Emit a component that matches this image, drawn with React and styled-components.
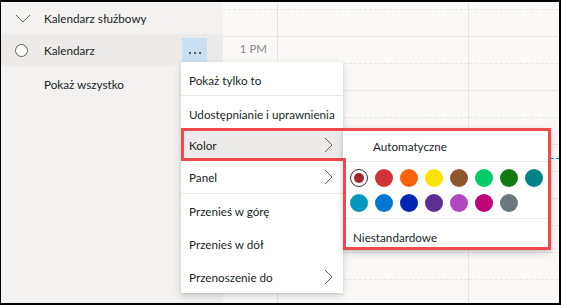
import React from 'react';
import styled, { createGlobalStyle } from 'styled-components';

const GlobalStyle = createGlobalStyle`
  body {
    margin: 0;
    font-family: Lato, "Open Sans", sans-serif;
    color: #201f1e;
  }
`;

const Frame = styled.div`
  position: relative;
  box-sizing: border-box;
  width: 561px;
  height: 305px;
  border-style: solid;
  border-color: #000;
  border-width: 2px 2px 2px 1px;
  display: flex;
  overflow: hidden;
  background: #faf9f8;
`;

const Sidebar = styled.div`
  width: 222px;
  flex-shrink: 0;
  background: #f3f2f1;
  display: flex;
  flex-direction: column;
`;

const NavRow = styled.div`
  height: ${(p) => p.$h || 32}px;
  display: flex;
  align-items: center;
  background: ${(p) => (p.$active ? '#edebe9' : 'transparent')};
  font-size: 11.7px;
  color: #201f1e;
`;

const NavIcon = styled.span`
  width: 43px;
  flex-shrink: 0;
  display: flex;
  align-items: center;
  padding-left: 14px;
  box-sizing: border-box;
`;

const NavText = styled.span`
  flex: 1;
`;

const Ring = styled.span`
  width: 13px;
  height: 13px;
  border: 1px solid #605e5c;
  border-radius: 50%;
  box-sizing: border-box;
  background: #fff;
`;

const MoreButton = styled.span`
  width: 25px;
  height: 28px;
  margin-right: 16px;
  align-self: flex-end;
  background: #c7e0f4;
  display: flex;
  align-items: center;
  justify-content: center;
  gap: 3px;
  padding-top: 2px;
  box-sizing: border-box;

  i {
    width: 2px;
    height: 2px;
    background: #323130;
    border-radius: 50%;
  }
`;

const Grid = styled.div`
  flex: 1;
  display: flex;
  position: relative;
`;

const Column = styled.div`
  width: ${(p) => (p.$w ? `${p.$w}px` : 'auto')};
  flex: ${(p) => (p.$w ? 'none' : '1')};
  border-right: ${(p) => (p.$last ? 'none' : '1px solid #e6e4e2')};
  display: flex;
  flex-direction: column;
  position: relative;
`;

const Slot = styled.div`
  box-sizing: border-box;
  height: ${(p) => (p.$first ? 8 : 27)}px;
  flex-shrink: 0;
  border-bottom: 1px ${(p) => (p.$dashed ? 'dashed' : 'solid')} #e8e6e4;
  font-size: 11.5px;
  color: #8a8886;
  text-align: right;
  padding: 5px 10px 0 0;
`;

const NowLine = styled.div`
  position: absolute;
  left: 0;
  right: 0;
  top: 156px;
  border-top: 1px dashed #0078d4;
`;

const Menu = styled.div`
  position: absolute;
  left: 180px;
  top: 60px;
  width: 162px;
  background: #fff;
  box-shadow: 0 3px 8px rgba(0, 0, 0, 0.16), 0 1px 2px rgba(0, 0, 0, 0.1);
  display: flex;
  flex-direction: column;
  font-size: 11.7px;
`;

const MenuItem = styled.div`
  position: relative;
  height: ${(p) => p.$h || 33}px;
  flex-shrink: 0;
  display: flex;
  align-items: center;
  justify-content: space-between;
  padding: ${(p) => p.$top || 0}px 10px 0 8px;
  box-sizing: border-box;
  background: ${(p) => (p.$active ? '#edebe9' : '#fff')};
  white-space: nowrap;

  ${(p) =>
    p.$marked &&
    `
    &::after {
      content: '';
      position: absolute;
      left: 0;
      top: -1px;
      right: -3px;
      bottom: 0;
      border: 3px solid #ee4a50;
      border-right: none;
    }
  `}
`;

const Divider = styled.div`
  height: 1px;
  flex-shrink: 0;
  background: #edebe9;
`;

const Chevron = () => (
  <svg width="9" height="16" viewBox="0 0 9 16">
    <path d="M1 1 L8 8 L1 15" fill="none" stroke="#605e5c" strokeWidth="1" />
  </svg>
);

const ChevronDown = () => (
  <svg width="16" height="9" viewBox="0 0 16 9">
    <path d="M1 1 L8 8 L15 1" fill="none" stroke="#605e5c" strokeWidth="1" />
  </svg>
);

const Submenu = styled.div`
  position: absolute;
  left: 342px;
  top: 126px;
  width: 208px;
  height: 122px;
  background: #fff;
  box-shadow: 0 3px 8px rgba(0, 0, 0, 0.16), 0 1px 2px rgba(0, 0, 0, 0.1);
  display: flex;
  flex-direction: column;
  font-size: 11.7px;

  &::before {
    content: '';
    position: absolute;
    left: 0;
    right: 0;
    top: 0;
    bottom: 0;
    border: 3px solid #ee4a50;
    border-left: none;
  }

  &::after {
    content: '';
    position: absolute;
    left: 0;
    top: 30px;
    bottom: 0;
    width: 3px;
    background: #ee4a50;
  }
`;

const SubRow = styled.div`
  height: ${(p) => p.$h}px;
  flex-shrink: 0;
  display: flex;
  align-items: center;
  padding-left: ${(p) => p.$pad}px;
  padding-top: ${(p) => p.$top || 0}px;
  box-sizing: border-box;
`;

const Swatches = styled.div`
  display: grid;
  grid-template-columns: repeat(8, 18px);
  grid-auto-rows: 18px;
  column-gap: 7px;
  row-gap: 7px;
  padding: 7px 0 6px 7px;
`;

const Swatch = styled.span`
  width: 18px;
  height: 18px;
  border-radius: 50%;
  box-sizing: border-box;
  background: ${(p) => (p.$selected ? '#fff' : p.$color)};
  border: ${(p) => (p.$selected ? '1px solid #323130' : 'none')};
  display: flex;
  align-items: center;
  justify-content: center;

  &::after {
    content: '';
    display: ${(p) => (p.$selected ? 'block' : 'none')};
    width: 10px;
    height: 10px;
    border-radius: 50%;
    background: ${(p) => p.$color};
  }
`;

const colors = [
  '#a4262c', '#d13438', '#f7630c', '#fde300', '#8e562e', '#00cc6a', '#107c10', '#038387',
  '#0099bc', '#0078d4', '#0027b4', '#5c2e91', '#b146c2', '#bf0077', '#69797e',
];

const slots = Array.from({ length: 12 }, (_, i) => i);

function TimeGrid() {
  const cols = [{ w: 54, time: true }, { w: 190 }, { last: true }];
  return (
    <Grid>
      {cols.map((c, ci) => (
        <Column key={ci} $w={c.w} $last={c.last}>
          {slots.map((i) => (
            <Slot key={i} $first={i === 0} $dashed={i % 2 === 0}>
              {c.time && i === 2 ? '1 PM' : null}
            </Slot>
          ))}
          {c.last && <NowLine />}
        </Column>
      ))}
    </Grid>
  );
}

export default function App() {
  return (
    <>
      <GlobalStyle />
      <Frame>
        <Sidebar>
          <NavRow $h={32}>
            <NavIcon>
              <ChevronDown />
            </NavIcon>
            <NavText>Kalendarz służbowy</NavText>
          </NavRow>
          <NavRow $h={32} $active>
            <NavIcon>
              <Ring />
            </NavIcon>
            <NavText>Kalendarz</NavText>
            <MoreButton>
              <i />
              <i />
              <i />
            </MoreButton>
          </NavRow>
          <NavRow $h={36}>
            <NavIcon />
            <NavText>Pokaż wszystko</NavText>
          </NavRow>
        </Sidebar>
        <TimeGrid />

        <Menu>
          <MenuItem $top={3}>Pokaż tylko to</MenuItem>
          <Divider />
          <MenuItem $top={3}>Udostępnianie i uprawnienia</MenuItem>
          <MenuItem $h={32} $active $marked>
            Kolor
            <Chevron />
          </MenuItem>
          <MenuItem $h={32}>
            Panel
            <Chevron />
          </MenuItem>
          <Divider />
          <MenuItem>Przenieś w górę</MenuItem>
          <MenuItem>Przenieś w dół</MenuItem>
          <MenuItem>
            Przenoszenie do
            <Chevron />
          </MenuItem>
        </Menu>

        <Submenu>
          <SubRow $h={33} $pad={30} $top={2}>Automatyczne</SubRow>
          <Divider />
          <Swatches>
            {colors.map((c, i) => (
              <Swatch key={c} $color={c} $selected={i === 0} />
            ))}
          </Swatches>
          <Divider />
          <SubRow $h={31} $pad={10} $top={4}>Niestandardowe</SubRow>
        </Submenu>
      </Frame>
    </>
  );
}
